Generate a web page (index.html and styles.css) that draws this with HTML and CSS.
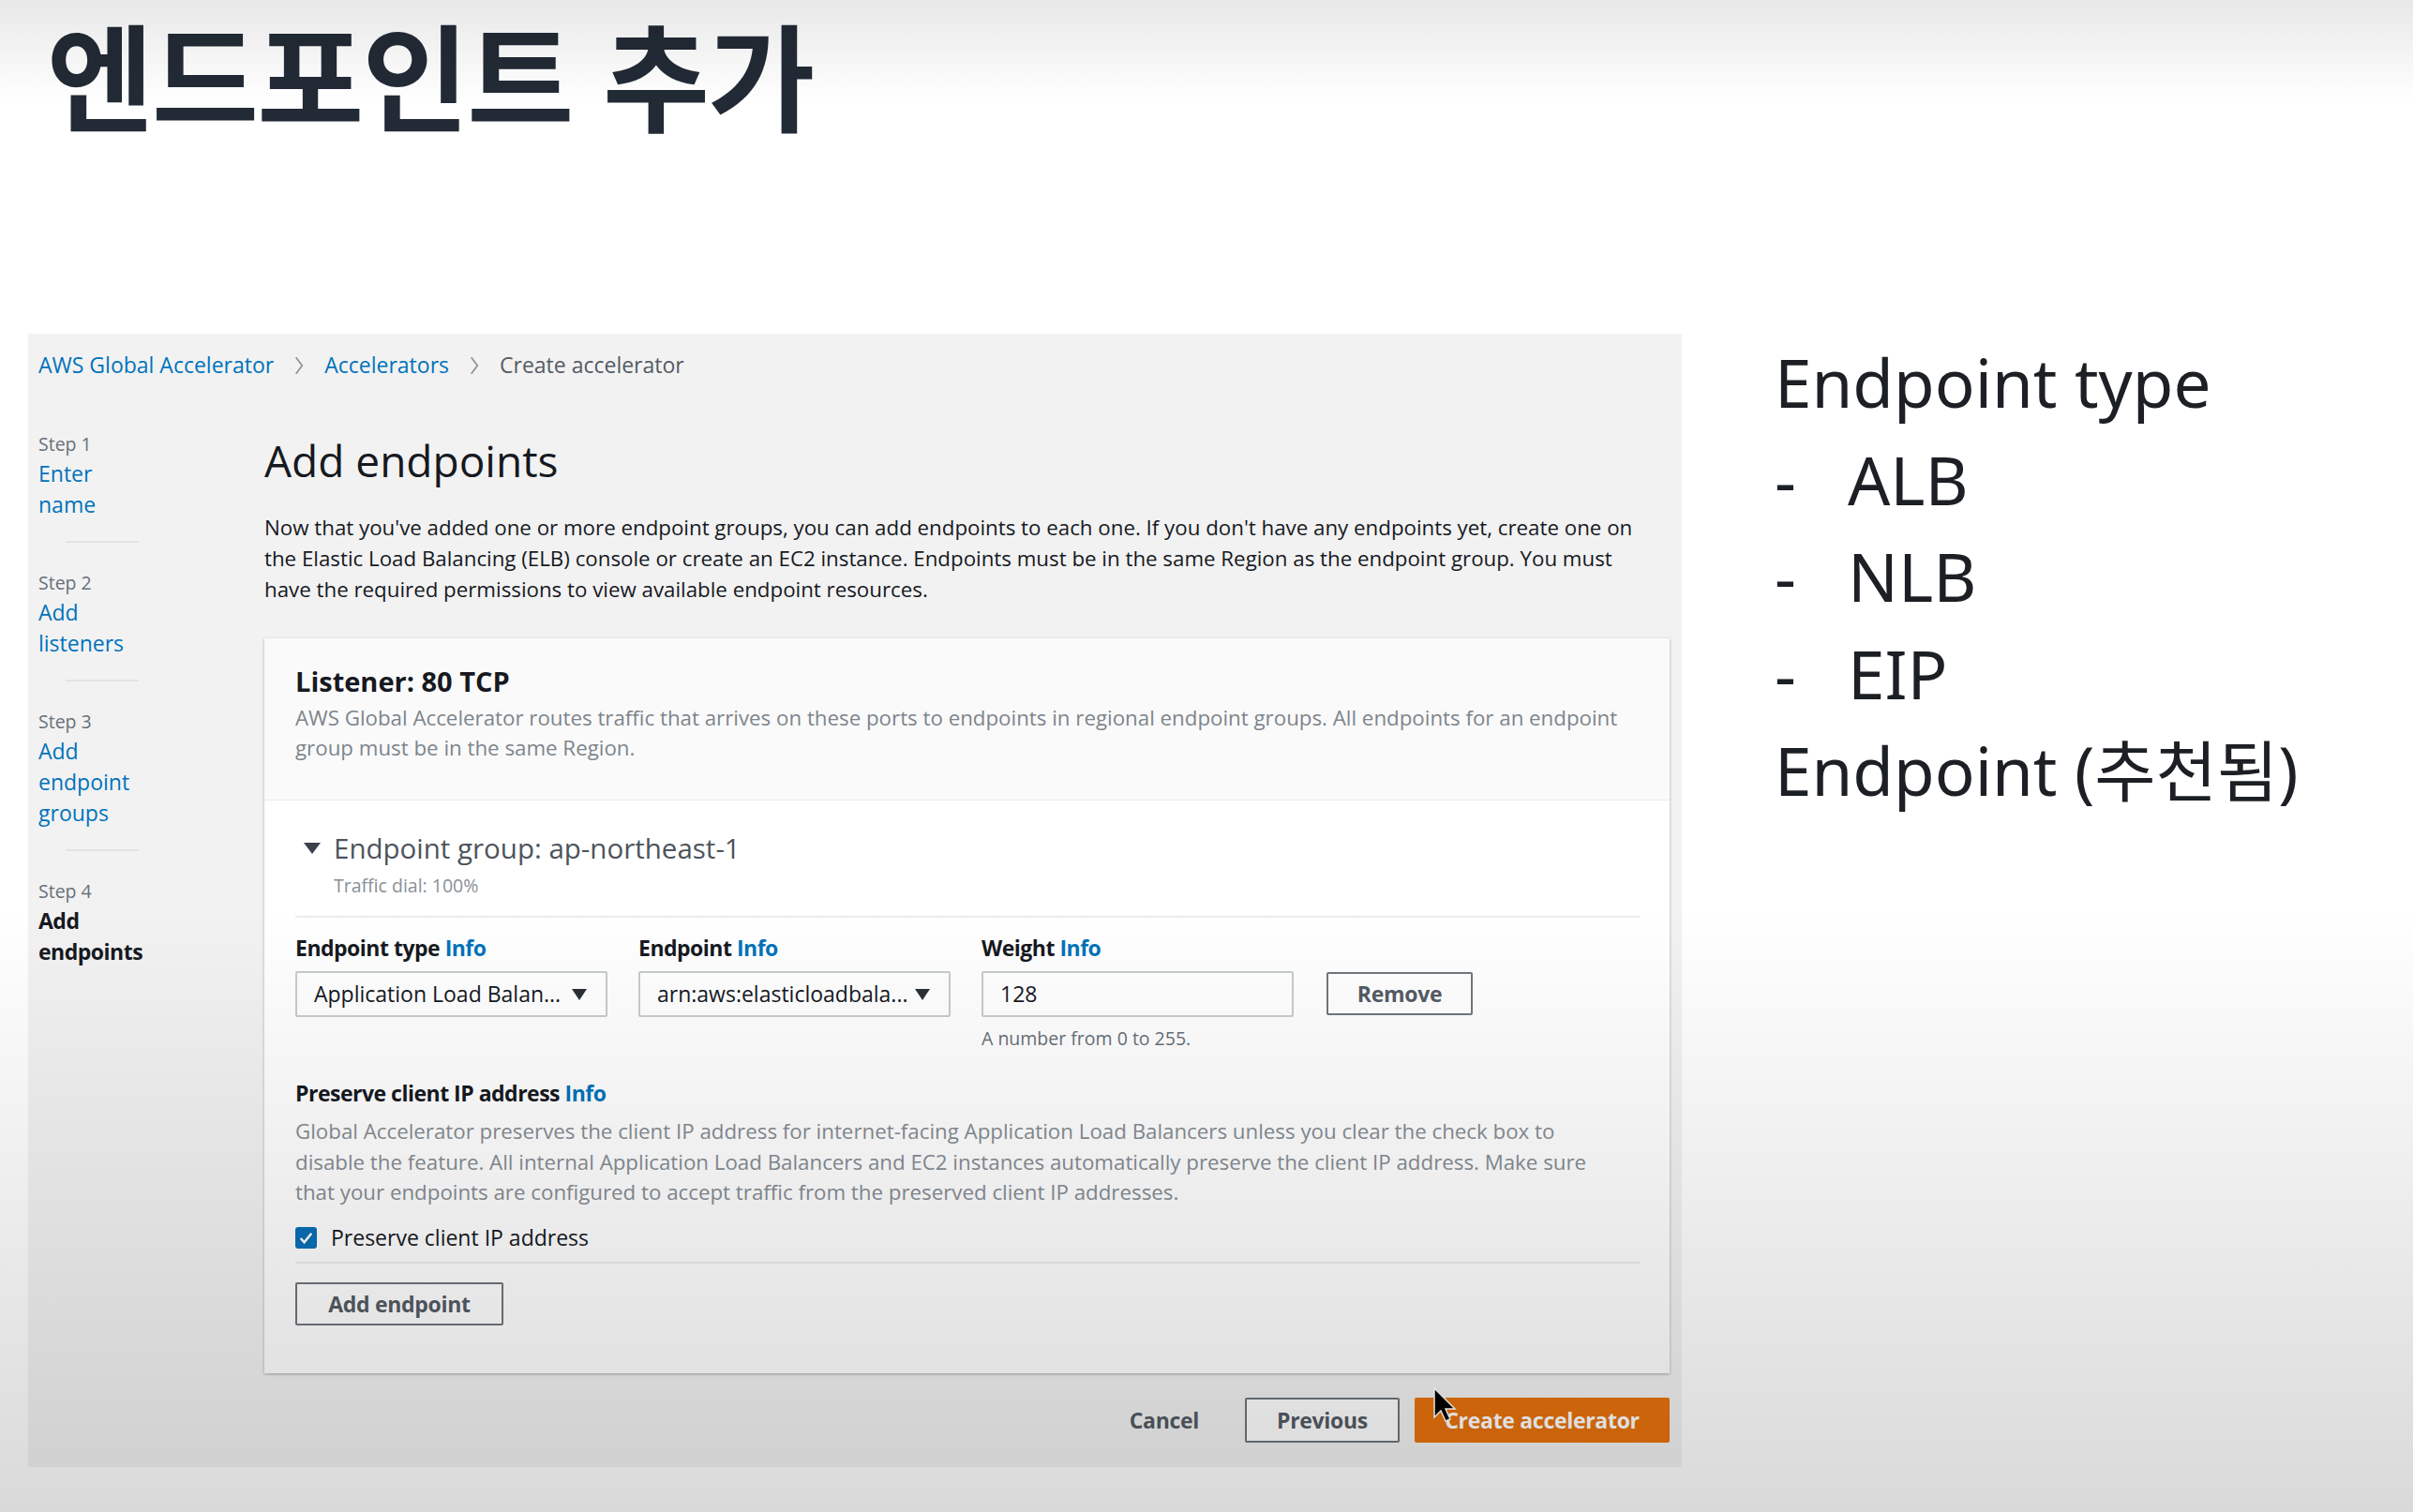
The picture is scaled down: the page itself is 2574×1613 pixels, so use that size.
FILE: index.html
```html
<!DOCTYPE html>
<html lang="ko">
<head>
    <meta charset="UTF-8">
    <title>엔드포인트 추가</title>
    <link rel="stylesheet" href="styles.css">
</head>
<body>
    <h1 class="slide-title">엔드포인트 추가</h1>

    <div class="slide-body">
        <div class="console">
            <nav class="crumbs">
                <a href="#">AWS Global Accelerator</a>
                <svg class="chev" viewBox="0 0 10 20"><path d="M2 2l6 8-6 8"/></svg>
                <a href="#">Accelerators</a>
                <svg class="chev" viewBox="0 0 10 20"><path d="M2 2l6 8-6 8"/></svg>
                <span>Create accelerator</span>
            </nav>

            <div class="wizard">
                <ol class="steps">
                    <li><small>Step 1</small><a href="#">Enter name</a></li>
                    <li><small>Step 2</small><a href="#">Add listeners</a></li>
                    <li><small>Step 3</small><a href="#">Add endpoint groups</a></li>
                    <li class="current"><small>Step 4</small><span>Add endpoints</span></li>
                </ol>

                <div class="content">
                    <h2>Add endpoints</h2>
                    <p class="intro">Now that you've added one or more endpoint groups, you can add endpoints to each one. If you don't have any endpoints yet, create one on the Elastic Load Balancing (ELB) console or create an EC2 instance. Endpoints must be in the same Region as the endpoint group. You must have the required permissions to view available endpoint resources.</p>

                    <section class="card">
                        <header class="card-head">
                            <h3>Listener: 80 TCP</h3>
                            <p>AWS Global Accelerator routes traffic that arrives on these ports to endpoints in regional endpoint groups. All endpoints for an endpoint group must be in the same Region.</p>
                        </header>
                        <div class="card-body">
                            <div class="group-title"><span class="caret"></span>Endpoint group: ap-northeast-1</div>
                            <div class="group-sub">Traffic dial: 100%</div>
                            <hr class="rule">

                            <div class="fields">
                                <div class="field">
                                    <label>Endpoint type <a href="#">Info</a></label>
                                    <div class="control select">Application Load Balan... <span class="arrow"></span></div>
                                </div>
                                <div class="field">
                                    <label>Endpoint <a href="#">Info</a></label>
                                    <div class="control select">arn:aws:elasticloadbala... <span class="arrow"></span></div>
                                </div>
                                <div class="field">
                                    <label>Weight <a href="#">Info</a></label>
                                    <div class="control">128</div>
                                    <div class="hint">A number from 0 to 255.</div>
                                </div>
                                <button class="btn btn-remove">Remove</button>
                            </div>

                            <div class="preserve">
                                <label>Preserve client IP address <a href="#">Info</a></label>
                                <p>Global Accelerator preserves the client IP address for internet-facing Application Load Balancers unless you clear the check box to disable the feature. All internal Application Load Balancers and EC2 instances automatically preserve the client IP address. Make sure that your endpoints are configured to accept traffic from the preserved client IP addresses.</p>
                                <div class="check">
                                    <span class="box"><svg viewBox="0 0 24 24"><path d="M6 12.5l4 4.5 8-10"/></svg></span>
                                    Preserve client IP address
                                </div>
                            </div>
                            <hr class="rule rule-tight">

                            <button class="btn btn-add">Add endpoint</button>
                        </div>
                    </section>

                    <div class="actions">
                        <button class="btn-link">Cancel</button>
                        <button class="btn btn-prev">Previous</button>
                        <button class="btn btn-primary">Create accelerator</button>
                    </div>
                </div>
            </div>
        </div>

        <div class="notes">
            <p>Endpoint type</p>
            <ul>
                <li>ALB</li>
                <li>NLB</li>
                <li>EIP</li>
            </ul>
            <p>Endpoint (추천됨)</p>
        </div>
    </div>

    <svg class="cursor" viewBox="0 0 26 40"><path d="M2 2v31l7-7 5 11 5-2-5-11h10z"/></svg>
    <div class="shade"></div>
</body>
</html>
```

FILE: styles.css
```css
* {
    box-sizing: border-box;
}
body {
    margin: 0;
    width: 2574px;
    height: 1613px;
    overflow: hidden;
    position: relative;
    background-color: #fff;
    font-family: "Open Sans", "Noto Sans", sans-serif;
    color: #16191f;
}
a {
    color: #0073bb;
    text-decoration: none;
}

/* slide */
.slide-title {
    margin: 0;
    padding: 0 0 0 50px;
    font-family: "Noto Sans CJK KR", sans-serif;
    font-weight: 700;
    font-size: 124px;
    line-height: 1.25;
    letter-spacing: -2px;
    color: #222a35;
}
.slide-body {
    display: flex;
    align-items: flex-start;
    margin-top: 201px;
    padding-left: 30px;
}

/* console screenshot */
.console {
    width: 1764px;
    flex-shrink: 0;
    background-color: #f2f2f2;
    padding: 17px 13px 26px 11px;
    font-size: 23px;
    line-height: 33px;
}
.crumbs {
    display: flex;
    align-items: center;
    height: 33px;
}
.crumbs span {
    color: #545b64;
}
.chev {
    width: 12px;
    height: 22px;
    margin: 0 21px;
    fill: none;
    stroke: #8c9196;
    stroke-width: 1.5;
}
.wizard {
    display: grid;
    grid-template-columns: 241px 1fr;
    margin-top: 52px;
}
.steps {
    list-style: none;
    margin: 0;
    padding: 0;
}
.steps li small {
    display: block;
    font-size: 19.5px;
    line-height: 31px;
    color: #687078;
}
.steps li a,
.steps li span {
    display: block;
    width: min-content;
}
.steps li:not(:last-child)::after {
    content: "";
    display: block;
    width: 78px;
    height: 2px;
    margin: 22px 0 27px 29px;
    background-color: #e3e4e4;
}
.steps .current span {
    font-weight: 700;
    letter-spacing: -0.5px;
}

.content h2 {
    margin: 5px 0 0;
    font-size: 46px;
    line-height: 56px;
    font-weight: 400;
}
.intro {
    max-width: 1475px;
    margin: 27px 0 0;
    font-size: 22.3px;
}

.card {
    margin-top: 36px;
    background-color: #fff;
    box-shadow: 0 1px 3px rgba(0, 0, 0, 0.3);
}
.card-head {
    padding: 28px 33px 39px;
    background-color: #fafafa;
    border-bottom: 1px solid #eaeded;
}
.card-head h3 {
    margin: 0;
    font-size: 29px;
    line-height: 36px;
}
.card-head p {
    margin: 5px 0 0;
    font-size: 22.3px;
    line-height: 32px;
    color: #7d858c;
}
.card-body {
    padding: 33px 31px 51px 33px;
}
.group-title {
    display: flex;
    align-items: center;
    font-size: 29.5px;
    line-height: 36px;
    color: #4d545c;
}
.caret {
    width: 0;
    height: 0;
    margin: 0 14px 0 9px;
    border-left: 9px solid transparent;
    border-right: 9px solid transparent;
    border-top: 12px solid #3b4148;
}
.group-sub {
    margin-top: 8px;
    padding-left: 41px;
    font-size: 19.5px;
    line-height: 28px;
    color: #8a9096;
}
.rule {
    margin: 18px 0 0;
    border: none;
    border-top: 2px solid #eceeee;
}

.fields {
    display: flex;
    align-items: flex-start;
    gap: 33px;
    margin-top: 16px;
}
.field {
    width: 333px;
}
label {
    display: block;
    font-weight: 700;
    letter-spacing: -0.5px;
}
label a {
    color: #0073bb;
}
.control {
    display: flex;
    align-items: center;
    justify-content: space-between;
    height: 49px;
    margin-top: 8px;
    padding: 0 20px 0 18px;
    background-color: #fff;
    border: 2px solid #c6cccd;
    border-radius: 2px;
    color: #16191f;
}
.arrow {
    width: 0;
    height: 0;
    border-left: 8px solid transparent;
    border-right: 8px solid transparent;
    border-top: 12px solid #2b3036;
}
.hint {
    margin-top: 9px;
    font-size: 19.5px;
    line-height: 28px;
    color: #687078;
}
.btn {
    font-family: inherit;
    font-size: 23px;
    font-weight: 700;
    letter-spacing: -0.3px;
    color: #545b64;
    background-color: #fff;
    border: 2px solid #6f767d;
    border-radius: 2px;
    cursor: pointer;
}
.btn-remove {
    width: 156px;
    height: 46px;
    margin: 42px 0 0 2px;
}

.preserve {
    margin-top: 28px;
}
.preserve p {
    max-width: 1410px;
    margin: 8px 0 0;
    font-size: 22.3px;
    line-height: 32.5px;
    color: #868d94;
}
.check {
    display: flex;
    align-items: center;
    gap: 15px;
    margin-top: 15px;
    height: 33px;
}
.box {
    width: 23px;
    height: 23px;
    border-radius: 3px;
    background-color: #0a6fb8;
}
.box svg {
    display: block;
    width: 23px;
    height: 23px;
    fill: none;
    stroke: #fff;
    stroke-width: 2.6;
}
.rule-tight {
    margin-top: 9px;
}
.btn-add {
    width: 222px;
    height: 46px;
    margin-top: 20px;
}

.actions {
    display: flex;
    justify-content: flex-end;
    align-items: center;
    gap: 16px;
    margin-top: 26px;
}
.btn-link {
    height: 48px;
    padding: 0 33px;
    font-family: inherit;
    font-size: 23px;
    font-weight: 700;
    letter-spacing: -0.3px;
    color: #545b64;
    background: none;
    border: none;
}
.btn-prev {
    width: 165px;
    height: 48px;
}
.btn-primary {
    width: 272px;
    height: 48px;
    color: #fff;
    background-color: #e8720c;
    border-color: #e8720c;
}

/* notes on the right */
.notes {
    margin-left: 99px;
    font-family: "Noto Sans", "Noto Sans CJK KR", sans-serif;
    font-size: 71px;
    line-height: 103.5px;
    color: #1c1f24;
}
.notes p,
.notes ul {
    margin: 0;
    padding: 0;
}
.notes li {
    list-style: none;
    display: flex;
}
.notes li::before {
    content: "-";
    width: 78px;
}

.cursor {
    position: absolute;
    left: 1528px;
    top: 1479px;
    width: 26px;
    height: 40px;
    fill: #000;
    stroke: #fff;
    stroke-width: 1.5;
}
.shade {
    position: absolute;
    inset: 0;
    pointer-events: none;
    background: linear-gradient(to bottom, rgba(0, 0, 0, 0.09) 0, rgba(0, 0, 0, 0) 110px, rgba(0, 0, 0, 0) 60%, rgba(0, 0, 0, 0.15) 100%);
}
```
